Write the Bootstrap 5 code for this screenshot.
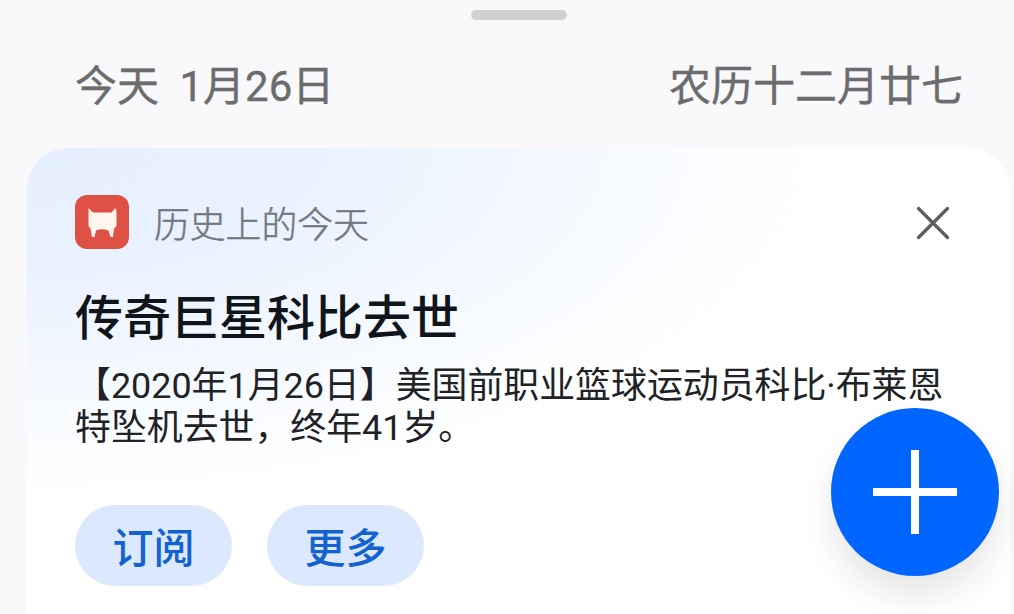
<!DOCTYPE html>
<html lang="zh-CN">
<head>
    <meta charset="UTF-8">
    <meta name="viewport" content="width=device-width, initial-scale=1.0">
    <title>历史上的今天</title>
    <link href="https://cdn.jsdelivr.net/npm/bootstrap@5.3.0/dist/css/bootstrap.min.css" rel="stylesheet">
    <style>
        body {
            height: 614px;
            background: #f9f9fb;
            font-family: Roboto, "Noto Sans CJK SC", sans-serif;
        }
        .handle {
            width: 96px;
            height: 10px;
            margin: 10px 0 0 24px;
            background: #d1d1d3;
        }
        .date-bar {
            height: 128px;
            padding: 3px 51px 0 75px;
            color: #6c6c6e;
            font-size: 42px;
            line-height: 128px;
            font-weight: 400;
            -webkit-text-stroke: .4px #6c6c6e;
        }
        .date-bar .solar {
            word-spacing: 10px;
        }
        .event-card {
            height: 466px;
            margin: 0 4px 0 27px;
            padding: 47px 0 0 48px;
            border-radius: 42px 42px 0 0;
            background: radial-gradient(ellipse 800px 350px at 0 0, #e4efff 0%, #eaf2ff 35%, #f5f9ff 68%, #fff 100%) #fff;
        }
        .app-icon {
            width: 54px;
            height: 54px;
        }
        .source {
            height: 54px;
            margin-left: 25px;
            padding-top: 4px;
            color: #717880;
            font-size: 35.8px;
            line-height: 54px;
            font-weight: 300;
            -webkit-text-stroke: .5px #717880;
        }
        .close-btn {
            margin: 2px 60px 0 0;
        }
        .event-title {
            margin-top: 35px;
            color: #10141b;
            font-size: 48px;
            line-height: 70px;
            font-weight: 500;
        }
        .event-text {
            margin-top: 11px;
            color: #202226;
            font-size: 35.9px;
            line-height: 42px;
            font-weight: 400;
        }
        .card-actions {
            gap: 35px;
            margin-top: 56px;
        }
        .pill-btn {
            width: 157px;
            height: 81px;
            padding: 7px 0 0;
            background: #dbe8fe;
            color: #1262cf;
            font-size: 41px;
            line-height: 74px;
            font-weight: 500;
        }
        .fab {
            right: 15px;
            top: 408px;
            width: 168px;
            height: 168px;
            background: #0066ff;
            box-shadow: 0 20px 32px rgba(40, 30, 30, .11);
        }
    </style>
</head>
<body class="position-relative overflow-hidden">

<div class="d-flex justify-content-center">
    <div class="handle rounded-pill"></div>
</div>

<header class="date-bar d-flex justify-content-between text-nowrap">
    <span class="solar">今天 1月26日</span>
    <span>农历十二月廿七</span>
</header>

<main class="event-card">
    <div class="d-flex align-items-center">
        <svg class="app-icon" viewBox="0 0 54 54">
            <rect width="54" height="54" rx="12" fill="#df5045"/>
            <path d="M13.500 13L18 17.500H36.500L40.500 13L41.500 16V31L39 33.500L38 42H35.500L33.500 35.500Q27 33 21 35.500L19.500 42H17L15.500 33.500L13.500 31Z" fill="#fff6ee"/>
        </svg>
        <span class="source">历史上的今天</span>
        <button type="button" class="close-btn btn p-0 border-0 ms-auto d-flex">
            <svg width="34" height="34" viewBox="0 0 34 34" stroke="#5c5c5e" stroke-width="3.2" stroke-linecap="round">
                <path d="M2.500 2.500L31.500 31.500M31.500 2.500L2.500 31.500"/>
            </svg>
        </button>
    </div>

    <h1 class="event-title mb-0">传奇巨星科比去世</h1>
    <p class="event-text mb-0 text-nowrap">【2020年1月26日】美国前职业篮球运动员科比·布莱恩<br>特坠机去世，终年41岁。</p>

    <div class="card-actions d-flex">
        <button type="button" class="pill-btn btn rounded-pill border-0">订阅</button>
        <button type="button" class="pill-btn btn rounded-pill border-0">更多</button>
    </div>
</main>

<button type="button" class="fab btn position-absolute rounded-circle border-0 p-0 d-flex align-items-center justify-content-center">
    <svg width="86" height="86" viewBox="0 0 86 86" stroke="#fff" stroke-width="8" stroke-linecap="butt">
        <path d="M43 1V85M1 43H85"/>
    </svg>
</button>

<script src="https://cdn.jsdelivr.net/npm/bootstrap@5.3.0/dist/js/bootstrap.bundle.min.js"></script>
</body>
</html>
